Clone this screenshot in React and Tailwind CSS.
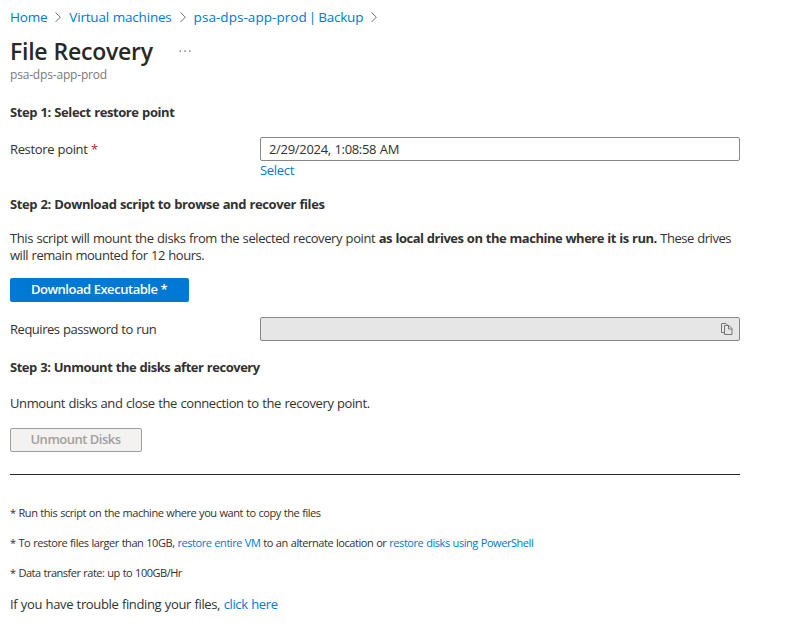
import React from "react";

const Chevron = () => (
  <svg className="mx-[7px] h-[12px] w-[8px] shrink-0" viewBox="0 0 8 12" fill="none" stroke="#605e5c" strokeWidth="0.9">
    <path d="M1.5 1.5 6.3 6.2 1.5 11" />
  </svg>
);

const Link = ({ children, className = "" }) => (
  <a href="#" className={`text-[#0078d4] ${className}`}>{children}</a>
);

const CopyIcon = () => (
  <svg className="h-[12px] w-[12px]" viewBox="0 0 12 12" fill="none" stroke="#797775" strokeWidth="1">
    <path d="M3.5 9.5h-3v-9h4.5l1.5 1.5" />
    <path d="M3.5 2.5h4.5l3 3v6h-7.5z" />
    <path d="M7.5 2.5v3.5h3.5" />
  </svg>
);

export default function App() {
  return (
    <main className="h-[642px] w-[789px] overflow-hidden bg-white pl-[10px] font-['Open_Sans','Noto_Sans',sans-serif] text-[13px] leading-[18px] tracking-[-0.36px] [word-spacing:0.5px] whitespace-nowrap text-[#323130]">
      <nav className="mt-[8px] flex h-[18px] items-center text-[13.5px] tracking-[-0.2px]">
        <Link>Home</Link>
        <Chevron />
        <Link>Virtual machines</Link>
        <Chevron />
        <Link className="tracking-[0.05px] [word-spacing:-1.6px]">psa-dps-app-prod | <span className="tracking-[-0.2px]">Backup</span></Link>
        <Chevron />
      </nav>
      <header>
        <div className="mt-[8px] flex h-[33px] items-center">
          <h1 className="w-[169px] text-[23px] leading-[32px] font-semibold tracking-[-0.24px] text-[#292827]">File Recovery</h1>
          <svg className="h-[2px] w-[12px]" viewBox="0 0 12 2" fill="#605e5c">
            <rect x="0.5" y="0.5" width="1.5" height="1.2" />
            <rect x="5.3" y="0.5" width="1.5" height="1.2" />
            <rect x="10.2" y="0.5" width="1.5" height="1.2" />
          </svg>
        </div>
        <p className="h-[16px] text-[12px] leading-[16px] tracking-[-0.18px] text-[#7a7876]">psa-dps-app-prod</p>
      </header>

      <h2 className="mt-[20px] font-bold tracking-[-0.41px]">Step 1: Select restore point</h2>
      <div className="mt-[16px] flex h-[24px] w-[730px] items-center">
        <label className="-mt-px w-[250px]">Restore point <span className="text-[#a4262c]">*</span></label>
        <div className="flex h-[24px] flex-1 items-center rounded-[2px] border border-[#8a8886] px-[8px] pb-px tracking-[-0.31px]">2/29/2024, 1:08:58 AM</div>
      </div>
      <div><Link className="ml-[250px] tracking-[-0.3px]">Select</Link></div>

      <h2 className="mt-[16px] font-bold tracking-[-0.41px]">Step 2: Download script to browse and recover files</h2>
      <p className="mt-[17px] leading-[17px] tracking-[-0.4px]">
        This script will mount the disks from the selected recovery point <b className="tracking-[-0.5px]">as local drives on the machine where it is run.</b> <span className="tracking-[-0.47px]">These drives</span>
        <br />
        <span className="tracking-[-0.45px]">will remain mounted for 12 hours.</span>
      </p>
      <button className="mt-[14px] block h-[24px] w-[179px] rounded-[2px] bg-[#0078d4] pr-[7px] pb-[2px] pl-[6px] text-center font-semibold tracking-[-0.46px] text-white">Download Executable *</button>
      <div className="mt-[15px] flex h-[24px] w-[730px] items-center">
        <label className="-mt-px w-[250px] tracking-[-0.47px]">Requires password to run</label>
        <div className="flex h-[24px] flex-1 items-center justify-end rounded-[2px] border border-[#8a8886] bg-[#e6e6e6] pr-[6px]"><CopyIcon /></div>
      </div>

      <h2 className="mt-[17px] font-bold tracking-[-0.48px]">Step 3: Unmount the disks after recovery</h2>
      <p className="mt-[18px] tracking-[-0.4px]">Unmount disks and close the connection to the recovery point.</p>
      <button className="mt-[16px] block h-[24px] w-[132px] rounded-[2px] border border-[#a19f9d] bg-[#f3f2f1] pr-[7px] pb-[2px] pl-[6px] text-center font-semibold tracking-[-0.5px] text-[#a19f9d]">Unmount Disks</button>
      <hr className="mt-[22px] w-[730px] border-[#292827]" />

      <div className="mt-[29px] flex flex-col gap-[12px] text-[11px] tracking-[-0.45px]">
        <p>* Run this script on the machine where you want to copy the files</p>
        <p>* To restore files larger than 10GB, <Link>restore entire VM</Link> to an alternate location or <Link>restore disks using PowerShell</Link></p>
        <p className="tracking-[-0.49px]">* Data transfer rate: up to 100GB/Hr</p>
      </div>
      <p className="mt-[13px] tracking-[-0.36px]">If you have trouble finding your files, <Link>click here</Link></p>
    </main>
  );
}
